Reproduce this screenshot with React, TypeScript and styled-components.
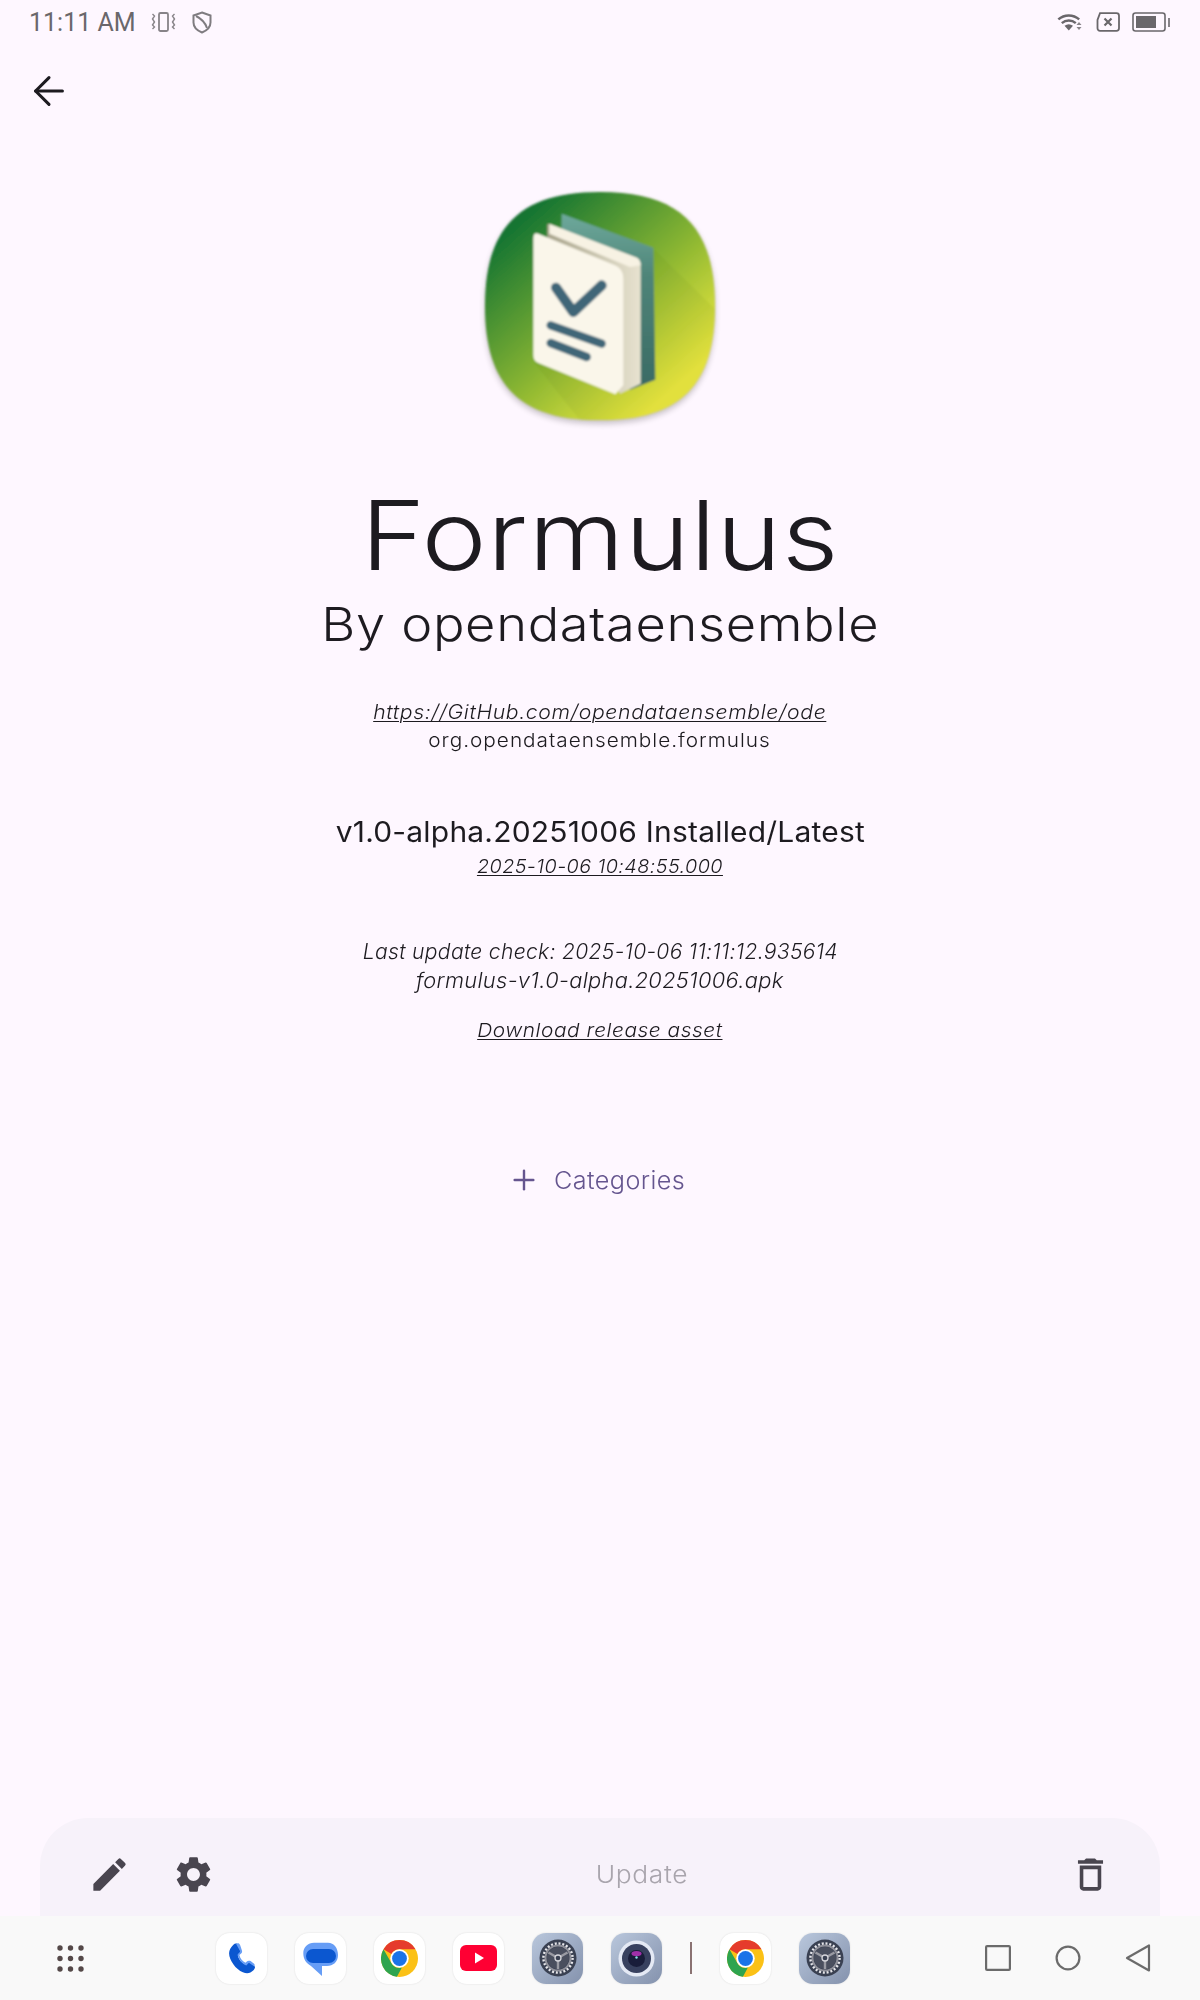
import React from "react";
import styled, { createGlobalStyle } from "styled-components";
import { ArrowLeft, Plus } from "lucide-react";
import { MdEdit, MdSettings, MdDeleteOutline } from "react-icons/md";

const Global = createGlobalStyle`
  html, body { margin: 0; padding: 0; background: #fef7ff; }
  * { box-sizing: border-box; }
`;

const Page = styled.div`
  width: 1200px;
  height: 2000px;
  display: flex;
  flex-direction: column;
  background: #fef7ff;
  font-family: Inter, "Liberation Sans", sans-serif;
  color: #1d1b20;
`;

const StatusBar = styled.div`
  height: 44px;
  display: flex;
  align-items: center;
  justify-content: space-between;
  padding: 0 30px 0 29px;
  color: #6a676b;
`;
const StatusGroup = styled.div<{ $gap: number }>`
  display: flex;
  align-items: center;
  gap: ${(p) => p.$gap}px;
`;
const Clock = styled.span`
  font-family: Roboto, sans-serif;
  font-size: 25px;
  margin-right: -1px;
`;

const Header = styled.div`
  height: 92px;
  display: flex;
  align-items: center;
  padding: 2px 0 0 26px;
`;

const Main = styled.main`
  flex: 1;
  display: flex;
  flex-direction: column;
  align-items: center;
  padding-top: 56px;
`;

const Logo = styled.svg`
  width: 230px;
  height: 230px;
  overflow: visible;
  display: block;
`;

const Line = styled.div<{ $size: number; $weight?: number; $h: number; $track?: number; $top?: number; $italic?: boolean; $under?: boolean; $wide?: number }>`
  font-size: ${(p) => p.$size}px;
  font-weight: ${(p) => p.$weight ?? 300};
  line-height: ${(p) => p.$h}px;
  letter-spacing: ${(p) => p.$track ?? 0}px;
  margin-top: ${(p) => p.$top ?? 0}px;
  font-style: ${(p) => (p.$italic ? "italic" : "normal")};
  text-decoration: ${(p) => (p.$under ? "underline" : "none")};
  text-decoration-thickness: 1px;
  text-underline-offset: 2px;
  color: #1d1b20;
  white-space: nowrap;
  transform: scaleX(${(p) => p.$wide ?? 1});
`;

const CategoryButton = styled.div`
  display: flex;
  align-items: center;
  gap: 14px;
  margin-top: 115px;
  height: 40px;
  padding-right: 14px;
  color: #65558f;
  font-size: 24px;
  font-weight: 300;
  letter-spacing: 0.4px;
`;
const CategoryLabel = styled.span`
  display: block;
  transform: scaleX(1.05);
  transform-origin: left center;
`;

const Sheet = styled.div`
  margin: 0 40px;
  height: 98px;
  background: #f7f2fa;
  border-radius: 48px 48px 0 0;
  display: flex;
  align-items: center;
  padding: 14px 48px 0;
  gap: 41px;
  color: #49454f;
`;
const UpdateLabel = styled.div`
  flex: 1;
  text-align: center;
  font-size: 24px;
  font-weight: 300;
  letter-spacing: 0.6px;
  color: #a9a5ad;
  transform: scaleX(1.1);
`;

const NavBar = styled.div`
  height: 84px;
  background: #f9f9f9;
  display: grid;
  grid-template-columns: 216px auto 1fr;
  align-items: center;
`;
const NavLeft = styled.div`
  padding-left: 57px;
  display: flex;
`;
const Dock = styled.div`
  display: flex;
  align-items: center;
  gap: 28px;
`;
const AppTile = styled.div<{ $bg?: string }>`
  width: 51px;
  height: 51px;
  border-radius: 14px;
  background: ${(p) => p.$bg ?? "#ffffff"};
  box-shadow: 0 0 2px rgba(0, 0, 0, 0.12);
  display: flex;
  align-items: center;
  justify-content: center;
`;
const Divider = styled.div`
  width: 2px;
  height: 32px;
  background: #8a7272;
`;
const NavRight = styled.div`
  display: flex;
  justify-content: flex-end;
  align-items: center;
  gap: 44px;
  padding-right: 49px;
  color: #6b6b6b;
`;

const Chrome = () => (
  <svg width="37" height="37" viewBox="0 0 48 48">
    <circle cx="24" cy="24" r="24" fill="#fbc116" />
    <path d="M24 0a24 24 0 0 1 20.8 12H24a12 12 0 0 0-10.4 6L3.2 12A24 24 0 0 1 24 0z" fill="#e53b2c" />
    <path d="M3.2 12l10.4 18a12 12 0 0 0 13.5 5.6L20.7 47.8A24 24 0 0 1 3.2 12z" fill="#2ea44f" />
    <circle cx="24" cy="24" r="12" fill="#fff" />
    <circle cx="24" cy="24" r="9.6" fill="#1a73e8" />
  </svg>
);

const Gear = () => (
  <svg width="38" height="38" viewBox="0 0 38 38">
    <circle cx="19" cy="19" r="18.5" fill="#3a4152" />
    <circle cx="19" cy="19" r="14.5" fill="none" stroke="#e6e6ea" strokeWidth="2.6" strokeDasharray="2 1.8" />
    <circle cx="19" cy="19" r="12.5" fill="none" stroke="#8f9099" strokeWidth="2" />
    <circle cx="19" cy="19" r="11" fill="#4a4f5e" />
    <g stroke="#9a9ba3" strokeWidth="2.4">
      <path d="M19 19L19 30" />
      <path d="M19 19L9.5 13.5" />
      <path d="M19 19L28.5 13.5" />
    </g>
    <circle cx="19" cy="19" r="3" fill="#3a4152" stroke="#d5d5da" strokeWidth="1.3" />
  </svg>
);

const Camera = () => (
  <svg width="37" height="37" viewBox="0 0 37 37">
    <circle cx="18.5" cy="18.5" r="18" fill="#e4e9f4" />
    <circle cx="18.5" cy="18.5" r="14.5" fill="#38415f" />
    <circle cx="18.5" cy="18.5" r="8.5" fill="#191d3a" />
    <ellipse cx="18.5" cy="13.5" rx="5" ry="2.6" fill="#a030a8" />
    <circle cx="18.5" cy="17.5" r="1.2" fill="#8fe0e8" />
  </svg>
);

const TILE_GRAD = "linear-gradient(135deg, #b9c7dc 0%, #8492ad 100%)";

export default function App() {
  return (
    <Page>
      <Global />
      <StatusBar>
        <StatusGroup $gap={16}>
          <Clock>11:11 AM</Clock>
          <svg width="25" height="22" viewBox="0 0 25 22" fill="none" stroke="currentColor" strokeWidth="1.8" opacity="0.8">
            <rect x="8" y="2" width="9" height="18" rx="1.5" />
            <path d="M1.5 3l2 2-2 3 2 3-2 3 2 2-2 2M23.5 3l-2 2 2 3-2 3 2 3-2 2 2 2" strokeWidth="1.4" />
          </svg>
          <svg width="20" height="23" viewBox="0 0 20 23" fill="none" stroke="currentColor" strokeWidth="2" opacity="0.85">
            <path d="M10 1.5l8.5 3v7c0 4.6-3.6 8-8.5 10-4.900-2-8.500-5.400-8.500-10v-7z" />
            <path d="M4 5c4 2 9 6 11 12" />
          </svg>
        </StatusGroup>
        <StatusGroup $gap={12}>
          <svg width="26" height="20" viewBox="0 0 26 20" fill="currentColor">
            <path d="M0.500 6.500A17 17 0 0 1 23 6.500L21.400 8.300A14.500 14.500 0 0 0 2.200 8.300z" />
            <path d="M4 10.200A12 12 0 0 1 19.600 10.200L18 12A9.500 9.500 0 0 0 5.600 12z" />
            <path d="M7.500 13.800A7 7 0 0 1 16 13.800L11.800 18.500z" />
            <path d="M19.500 13l2.500-3 2.500 3zM19.500 15h5l-2.500 3z" opacity="0.8" />
          </svg>
          <svg width="25" height="20" viewBox="0 0 25 20" fill="none" stroke="currentColor">
            <path d="M5 1.200h16.500a2.500 2.500 0 0 1 2.500 2.500v12.600a2.500 2.500 0 0 1-2.500 2.500H5a2.500 2.500 0 0 1-2.500-2.500V8z" strokeWidth="1.800" />
            <path d="M9.500 6.500l7 7M16.500 6.500l-7 7" strokeWidth="2.200" />
          </svg>
          <svg width="38" height="20" viewBox="0 0 38 20" fill="none">
            <rect x="1" y="1" width="32" height="18" rx="2.500" stroke="currentColor" strokeWidth="1.600" />
            <rect x="4" y="4" width="20" height="12" fill="currentColor" />
            <rect x="36" y="6" width="2" height="9" fill="currentColor" opacity="0.8" />
          </svg>
        </StatusGroup>
      </StatusBar>

      <Header>
        <ArrowLeft size={46} strokeWidth={1.6} color="#1d1b20" />
      </Header>

      <Main>
        <Logo viewBox="75 65 690 690">
          <defs>
            <linearGradient id="bg" x1="0.1" y1="0.05" x2="0.9" y2="0.95">
              <stop offset="0.08" stopColor="#127330" />
              <stop offset="0.5" stopColor="#82b130" />
              <stop offset="0.88" stopColor="#eeea40" />
            </linearGradient>
            <linearGradient id="cover" x1="0" y1="0" x2="0" y2="1">
              <stop offset="0" stopColor="#6ea99c" />
              <stop offset="0.35" stopColor="#4f8579" />
              <stop offset="1" stopColor="#3a6a64" />
            </linearGradient>
            <linearGradient id="edge" x1="0" y1="0" x2="1" y2="0">
              <stop offset="0" stopColor="#a8a48c" />
              <stop offset="1" stopColor="#e8e3d0" />
            </linearGradient>
            <filter id="soft" x="-10%" y="-10%" width="120%" height="120%">
              <feGaussianBlur stdDeviation="3" />
            </filter>
            <filter id="drop" x="-10%" y="-10%" width="120%" height="125%">
              <feGaussianBlur stdDeviation="9" />
            </filter>
            <clipPath id="shape">
              <path d="M420 65C660 65 765 170 765 408C765 645 660 750 420 750C180 750 75 645 75 408C75 170 180 65 420 65Z" />
            </clipPath>
          </defs>
          <path d="M420 75C660 75 765 180 765 418C765 655 660 760 420 760C180 760 75 655 75 418C75 180 180 75 420 75Z" fill="#000" opacity="0.22" filter="url(#drop)" />
          <g filter="url(#soft)">
            <g clipPath="url(#shape)">
              <rect x="60" y="50" width="720" height="720" fill="url(#bg)" />
              <path d="M585 240L800 450L800 800L400 800L225 580Z" fill="#4a6a10" opacity="0.07" />
            </g>
            <path d="M305 130L580 232L586 628L510 658L300 400Z" fill="url(#cover)" />
            <path d="M262 160L530 262Q542 268 542 285L542 640L480 670L262 300Z" fill="url(#edge)" />
            <path d="M268 160L530 262Q542 268 542 285L510 290L268 190Z" fill="#f7f2e3" />
            <path d="M235 190L465 285Q490 295 490 325L490 645L466 672L235 578Q220 572 220 555L220 205Q220 185 235 190Z" fill="#faf6ea" />
            <path d="M288 352L340 425L425 345" fill="none" stroke="#3f6678" strokeWidth="30" strokeLinecap="round" strokeLinejoin="round" />
            <path d="M272 465L425 520" fill="none" stroke="#3f6678" strokeWidth="25" strokeLinecap="round" />
            <path d="M272 518L380 560" fill="none" stroke="#3f6678" strokeWidth="25" strokeLinecap="round" />
          </g>
        </Logo>

        <Line $size={96} $h={100} $top={63} $track={0.5} $wide={1.145}>Formulus</Line>
        <Line $size={47} $h={56} $top={11} $track={0.6} $wide={1.115}>By opendataensemble</Line>
        <Line $size={20} $h={28} $top={46} $italic $under $track={0.6} $wide={1.06}>https://GitHub.com/opendataensemble/ode</Line>
        <Line $size={19} $h={28} $top={1} $track={0.9} $wide={1.094}>org.opendataensemble.formulus</Line>
        <Line $size={28} $weight={400} $h={36} $top={59} $track={0.2} $wide={1.07}>v1.0-alpha.20251006 Installed/Latest</Line>
        <Line $size={19} $h={28} $top={3} $italic $under $track={0.4} $wide={1.043}>2025-10-06 10:48:55.000</Line>
        <Line $size={21} $h={30} $top={56} $italic $track={0.3} $wide={1.005}>Last update check: 2025-10-06 11:11:12.935614</Line>
        <Line $size={21} $h={30} $top={-1} $italic $track={0.3} $wide={1.04}>formulus-v1.0-alpha.20251006.apk</Line>
        <Line $size={19} $h={28} $top={21} $italic $under $track={0.5} $wide={1.097}>Download release asset</Line>

        <CategoryButton>
          <Plus size={32} strokeWidth={1.8} />
          <CategoryLabel>Categories</CategoryLabel>
        </CategoryButton>
      </Main>

      <Sheet>
        <MdEdit size={43} />
        <MdSettings size={43} />
        <UpdateLabel>Update</UpdateLabel>
        <MdDeleteOutline size={43} />
      </Sheet>

      <NavBar>
        <NavLeft>
          <svg width="27" height="27" viewBox="0 0 27 27" fill="#544848">
            {[3, 13.500, 24].flatMap((y) =>
              [3, 13.500, 24].map((x) => <circle key={`${x}-${y}`} cx={x} cy={y} r="2.700" />)
            )}
          </svg>
        </NavLeft>
        <Dock>
          <AppTile>
            <svg width="26" height="31" viewBox="0 0 30 36">
              <path d="M5 2c2-2 5-2 6 1l2 6c.5 2-.5 3-2 4l-1 1c1 5 4 9 9 11l1-1c1.500-1.500 3-2 5-1l4 3c2 2 1 4-1 6-3 3-7 4-12 2C8 31 0 20 0 12 0 8 2 5 5 2z" fill="#0b57d0" />
              <path d="M8 1c2-1 4-1 5 2l2 6c.5 2-.5 3-2 4l-1 1c1 4 3 7 7 9l1-1c1.500-1.500 3-2 5-1l4 3c1 1 1 2 0 3l-6-4-3 3c-5-2-9-7-10-13l3-3z" fill="#669df6" />
            </svg>
          </AppTile>
          <AppTile>
            <svg width="51" height="51" viewBox="0 0 51 51">
              <path d="M19 9.700H33C39 9.700 43 15 43 22C43 29 38 33 32 33H27V43L16 33C11 30 8.300 26 8.300 20C8.300 14 13 9.700 19 9.700Z" fill="#669df6" />
              <rect x="11" y="16" width="30" height="14" rx="7" fill="#0b57d0" />
            </svg>
          </AppTile>
          <AppTile><Chrome /></AppTile>
          <AppTile>
            <svg width="37" height="26" viewBox="0 0 37 26">
              <rect width="37" height="26" rx="6" fill="#ff0033" />
              <path d="M15 7.500l9 5.500-9 5.500z" fill="#fff" />
            </svg>
          </AppTile>
          <AppTile $bg={TILE_GRAD}><Gear /></AppTile>
          <AppTile $bg={TILE_GRAD}><Camera /></AppTile>
          <Divider />
          <AppTile><Chrome /></AppTile>
          <AppTile $bg={TILE_GRAD}><Gear /></AppTile>
        </Dock>
        <NavRight>
          <svg width="26" height="26" viewBox="0 0 26 26" fill="none" stroke="currentColor" strokeWidth="2.200">
            <rect x="1.100" y="1.100" width="23.800" height="23.800" rx="1" />
          </svg>
          <svg width="26" height="26" viewBox="0 0 26 26" fill="none" stroke="currentColor" strokeWidth="2.200">
            <circle cx="13" cy="13" r="11.400" />
          </svg>
          <svg width="26" height="28" viewBox="0 0 26 28" fill="none" stroke="currentColor" strokeWidth="2.200" strokeLinejoin="round">
            <path d="M24 1.500v25L2 14z" />
          </svg>
        </NavRight>
      </NavBar>
    </Page>
  );
}
